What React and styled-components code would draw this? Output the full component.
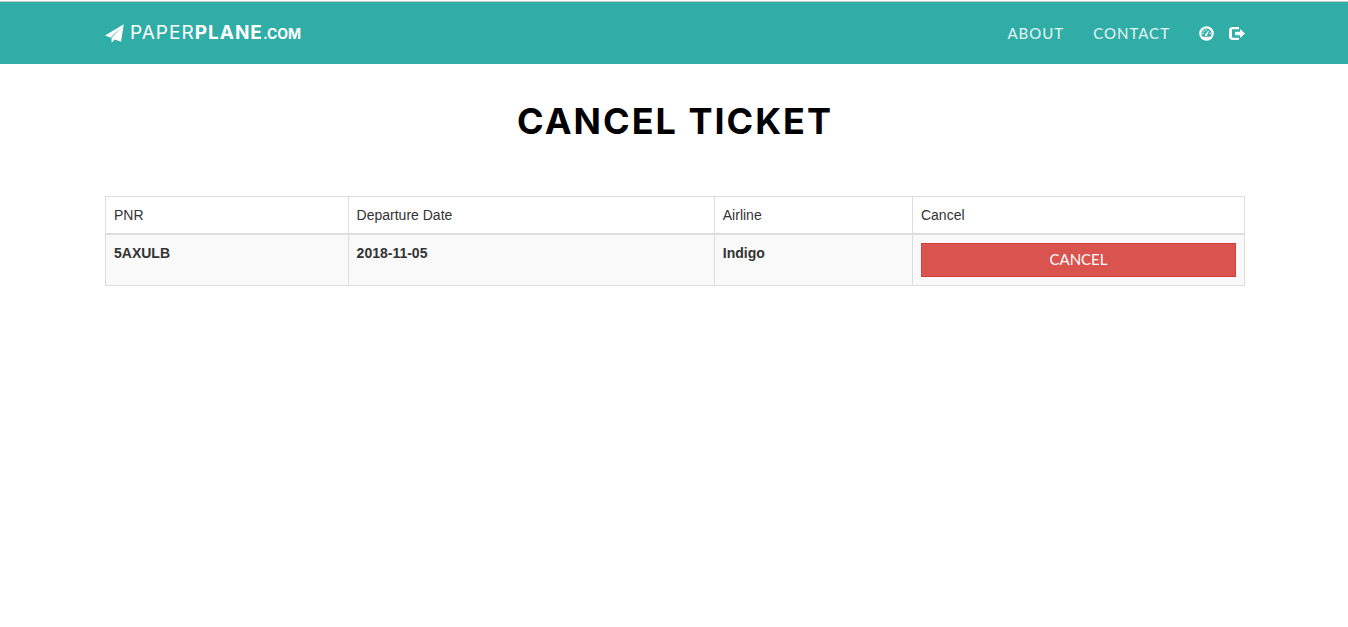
import React from "react";
import styled, { createGlobalStyle } from "styled-components";

const GlobalStyle = createGlobalStyle`
  *, *::before, *::after { box-sizing: border-box; }
  body {
    margin: 0;
    background: #fff;
    color: #333;
    font: 14px/20px "Liberation Sans", sans-serif;
  }
`;

const Container = styled.div`
  max-width: 1172px;
  margin: 0 auto;
  padding: 0 15px 0 17px;
`;

const Navbar = styled.nav`
  margin-top: 1px;
  background: #30ada7;
  border-top: 1px solid #c4c8c8;
`;

const NavRow = styled(Container)`
  display: flex;
  flex-wrap: wrap;
  align-items: center;
  justify-content: space-between;
  min-height: 62px;
  font-family: Lato, sans-serif;
`;

const Brand = styled.a`
  display: flex;
  align-items: center;
  gap: 6px;
  color: #fff;
  font: 400 19px/24px Inter, sans-serif;
  letter-spacing: 1px;
  text-decoration: none;

  strong { font-weight: 700; }
  small { font-size: 14px; font-weight: 700; letter-spacing: 0; }
`;

const NavLinks = styled.div`
  display: flex;
  align-items: center;
  gap: 29px;
`;

const NavLink = styled.a`
  color: #e6f6f5;
  font-size: 15px;
  line-height: 20px;
  letter-spacing: 1px;
  text-decoration: none;
`;

const IconLinks = styled.div`
  display: flex;
  gap: 15px;
`;

const IconLink = styled.a`
  display: flex;
  color: #fff;
`;

const Title = styled.h1`
  margin: 36px 0 54px;
  color: #000;
  font: 700 36px/42px Inter, sans-serif;
  letter-spacing: 2px;
  text-align: center;
`;

const Table = styled.table`
  width: 100%;
  table-layout: fixed;
  border: 1px solid #ddd;
  border-collapse: collapse;
`;

const Column = styled.col`
  width: ${({ $share }) => $share}%;
`;

const HeadCell = styled.th`
  padding: 8px;
  border: 1px solid #ddd;
  border-bottom-width: 2px;
  font-weight: 400;
  text-align: left;
`;

const Cell = styled.td`
  padding: 8px;
  border: 1px solid #ddd;
  background: #f9f9f9;
  font-weight: 700;
  vertical-align: top;
`;

const CancelButton = styled.button`
  display: block;
  width: 100%;
  height: 34px;
  padding: 5px 12px 7px;
  border: 1px solid #d43f3a;
  background: #d9534f;
  color: #fff;
  font: 400 15px/20px Lato, sans-serif;
  cursor: pointer;
`;

function PlaneIcon() {
  return (
    <svg width="19" height="19" viewBox="0 0 19 19" fill="currentColor" aria-hidden="true">
      <path d="M18.8.2 0 11.4l5.3 2.1L16.4 3.2 6.6 14.2v4.6l3.2-3.3 6.2 2.3z" />
      <path d="m5.3 13.5 11.1-10.3-9.8 11z" opacity=".5" />
    </svg>
  );
}

function DashboardIcon() {
  return (
    <svg width="15" height="15" viewBox="0 0 15 15" fill="none" stroke="currentColor" aria-hidden="true">
      <circle cx="7.5" cy="7.5" r="6.2" strokeWidth="2.2" />
      <path d="M4.2 10.7h6.6l1.4 1-2.3 2.1H5.1l-2.4-2z" fill="currentColor" stroke="none" />
      <path d="m7.2 9 2.3-4.2" strokeWidth="1.2" />
      <circle cx="7.2" cy="8.7" r="1.2" fill="currentColor" stroke="none" />
      <path d="M3.2 7.3h1.4M4.4 4.6l1 1M7 3.2v1.4M10.5 7.3h1.4" strokeWidth="1.2" />
    </svg>
  );
}

function LogOutIcon() {
  return (
    <svg width="16" height="15" viewBox="0 0 16 15" fill="currentColor" aria-hidden="true">
      <path d="M10 1v2.2H4.1C3.3 3.2 3 3.5 3 4.1v6.5c0 .8.3 1.1 1.1 1.1H10V14H3.8C1.5 14 0 12.7 0 10.6V4.3C0 2.2 1.5 1 3.8 1z" />
      <path d="M11 3 16 7.5 11 12V9.2H6V5.8h5z" />
    </svg>
  );
}

const columns = [
  { label: "PNR", share: 21.3 },
  { label: "Departure Date", share: 32.15 },
  { label: "Airline", share: 17.4 },
  { label: "Cancel", share: 29.15 },
];

const tickets = [{ pnr: "5AXULB", date: "2018-11-05", airline: "Indigo" }];

export default function App() {
  return (
    <>
      <GlobalStyle />
      <Navbar>
        <NavRow>
          <Brand href="#home">
            <PlaneIcon />
            <span>PAPER<strong>PLANE</strong><small>.COM</small></span>
          </Brand>
          <NavLinks>
            <NavLink href="#about">ABOUT</NavLink>
            <NavLink href="#contact">CONTACT</NavLink>
            <IconLinks>
              <IconLink href="#dashboard" aria-label="Dashboard"><DashboardIcon /></IconLink>
              <IconLink href="#logout" aria-label="Log out"><LogOutIcon /></IconLink>
            </IconLinks>
          </NavLinks>
        </NavRow>
      </Navbar>
      <Container as="main">
        <Title>CANCEL TICKET</Title>
        <Table>
          <colgroup>
            {columns.map((c) => <Column key={c.label} $share={c.share} />)}
          </colgroup>
          <thead>
            <tr>
              {columns.map((c) => <HeadCell key={c.label} scope="col">{c.label}</HeadCell>)}
            </tr>
          </thead>
          <tbody>
            {tickets.map((t) => (
              <tr key={t.pnr}>
                <Cell>{t.pnr}</Cell>
                <Cell>{t.date}</Cell>
                <Cell>{t.airline}</Cell>
                <Cell><CancelButton type="button">CANCEL</CancelButton></Cell>
              </tr>
            ))}
          </tbody>
        </Table>
      </Container>
    </>
  );
}
